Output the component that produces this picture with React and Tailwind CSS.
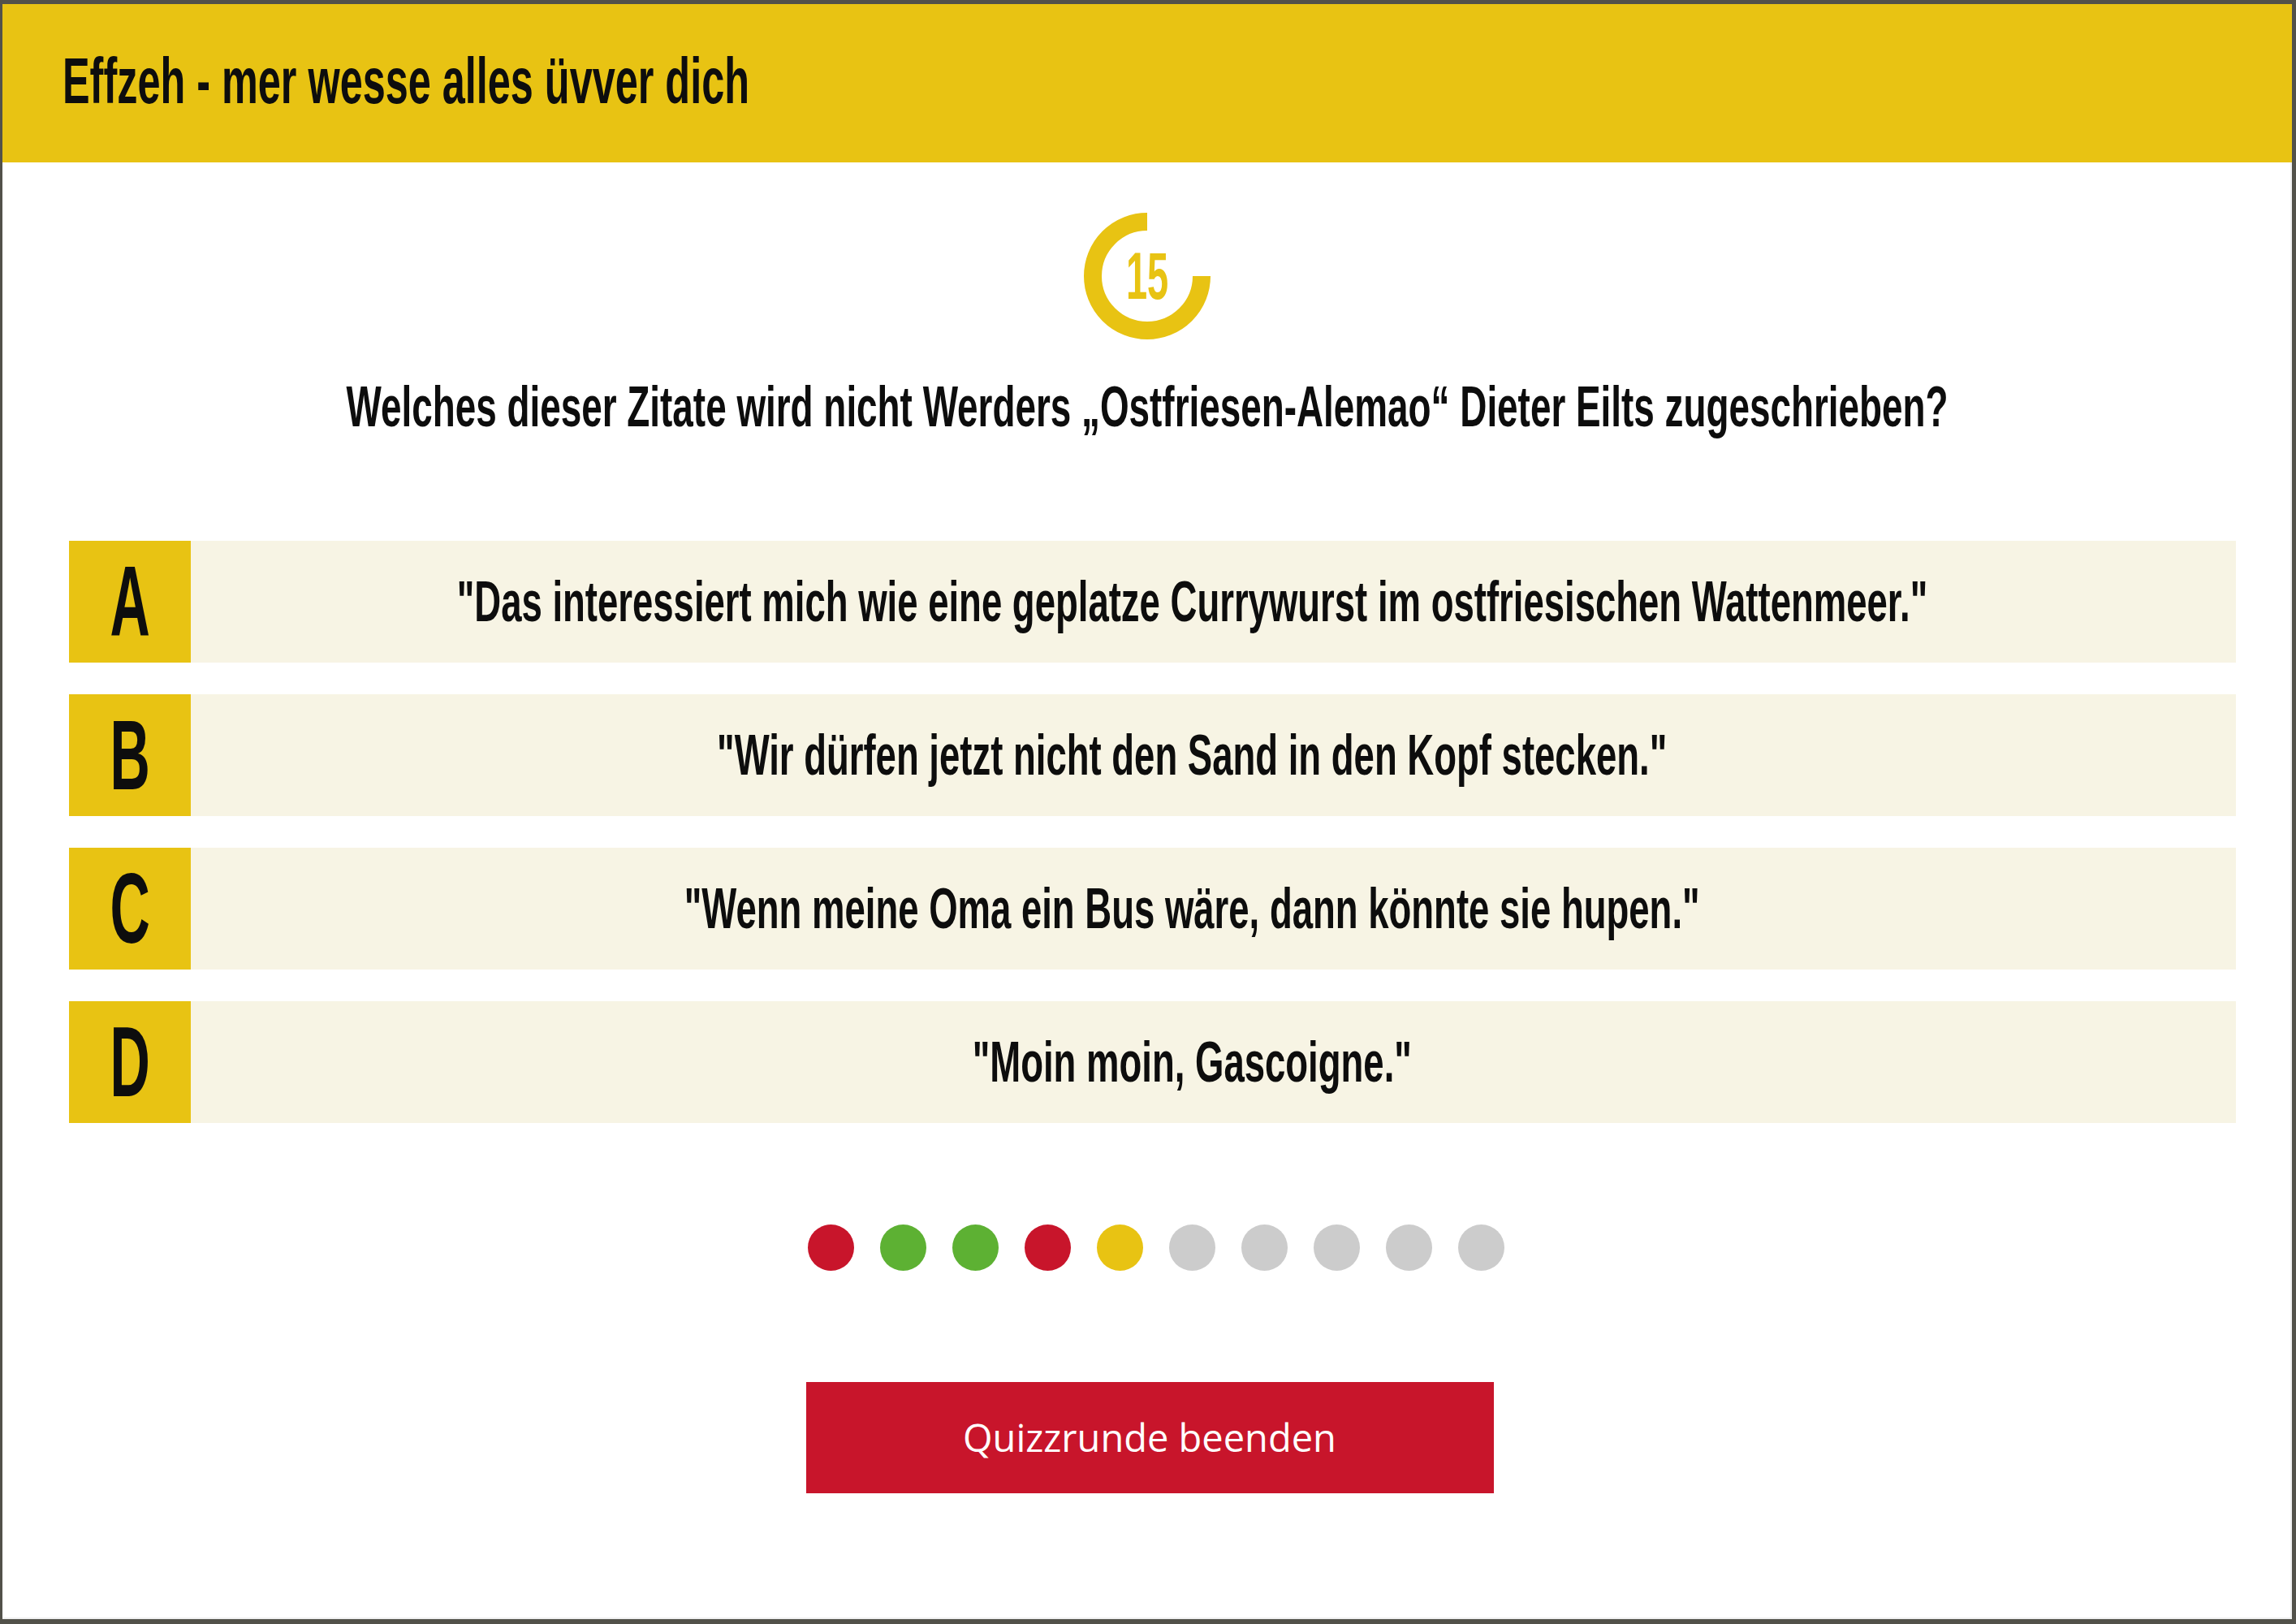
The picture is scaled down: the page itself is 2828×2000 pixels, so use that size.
import React from "react";

const answers = [
  { letter: "A", text: "\"Das interessiert mich wie eine geplatze Currywurst im ostfriesischen Wattenmeer.\"" },
  { letter: "B", text: "\"Wir dürfen jetzt nicht den Sand in den Kopf stecken.\"" },
  { letter: "C", text: "\"Wenn meine Oma ein Bus wäre, dann könnte sie hupen.\"" },
  { letter: "D", text: "\"Moin moin, Gascoigne.\"" },
];

// results of the round so far
const dots = [
  "bg-[#c8152b]",
  "bg-[#5db133]",
  "bg-[#5db133]",
  "bg-[#c8152b]",
  "bg-[#e8c313]",
  "bg-[#cccccc]",
  "bg-[#cccccc]",
  "bg-[#cccccc]",
  "bg-[#cccccc]",
  "bg-[#cccccc]",
];

// no condensed face installed, so squeeze Liberation Sans Bold
const narrow = "font-['Liberation_Sans',Arial,sans-serif] font-bold inline-block whitespace-nowrap leading-none";

function Timer({ seconds }) {
  return (
    <div className="relative w-[156px] h-[156px]">
      <svg width="156" height="156" viewBox="0 0 156 156">
        <path
          d="M145 78 A67 67 0 1 1 78 11"
          fill="none"
          stroke="#e8c313"
          strokeWidth="22"
        />
      </svg>
      <div className="absolute inset-0 flex items-center justify-center">
        <span className={`${narrow} text-[81px] scale-x-[0.58] text-[#e8c313]`}>
          {seconds}
        </span>
      </div>
    </div>
  );
}

function AnswerRow({ letter, text }) {
  return (
    <div className="flex h-[150px] w-full">
      <div className="w-[150px] h-full bg-[#e8c313] flex items-center justify-center shrink-0">
        <span className={`${narrow} text-[122px] scale-x-[0.56] text-[#0d0d0d]`}>
          {letter}
        </span>
      </div>
      <div className="flex-1 min-w-0 h-full bg-[#f7f4e4] flex items-center justify-center pr-[52px]">
        <span className={`${narrow} shrink-0 text-[70px] scale-x-[0.65] text-[#0d0d0d]`}>
          {text}
        </span>
      </div>
    </div>
  );
}

export default function App() {
  return (
    <div className="w-[2828px] h-[2000px] bg-white border-[#52514a] border-l-[3px] border-t-[5px] border-r-[5px] border-b-[6px] flex flex-col overflow-hidden shadow-[inset_-2px_-2px_0_#efefef]">
      <header className="h-[195px] bg-[#e8c313] flex items-center pl-[74px] pb-[5px] shrink-0">
        <h1 className={`${narrow} text-[80px] scale-x-[0.63] origin-left text-[#0d0d0d]`}>
          Effzeh - mer wesse alles üvver dich
        </h1>
      </header>

      <main className="flex flex-col items-center">
        <div className="mt-[62px]">
          <Timer seconds={15} />
        </div>

        <h2 className={`${narrow} mt-[48px] text-[70px] scale-x-[0.655] text-[#0d0d0d]`}>
          Welches dieser Zitate wird nicht Werders „Ostfriesen-Alemao“ Dieter Eilts zugeschrieben?
        </h2>

        <div className="mt-[130px] w-full pl-[82px] pr-[69px] flex flex-col gap-[39px]">
          {answers.map((a) => (
            <AnswerRow key={a.letter} letter={a.letter} text={a.text} />
          ))}
        </div>

        <div className="mt-[125px] flex gap-[32px] ml-[22px]">
          {dots.map((c, i) => (
            <span key={i} className={`w-[57px] h-[57px] rounded-full ${c}`} />
          ))}
        </div>

        <button className="mt-[137px] w-[847px] h-[137px] bg-[#c8152b] text-white text-[47px] font-['Open_Sans',sans-serif] ml-[6px]">
          Quizzrunde beenden
        </button>
      </main>
    </div>
  );
}
